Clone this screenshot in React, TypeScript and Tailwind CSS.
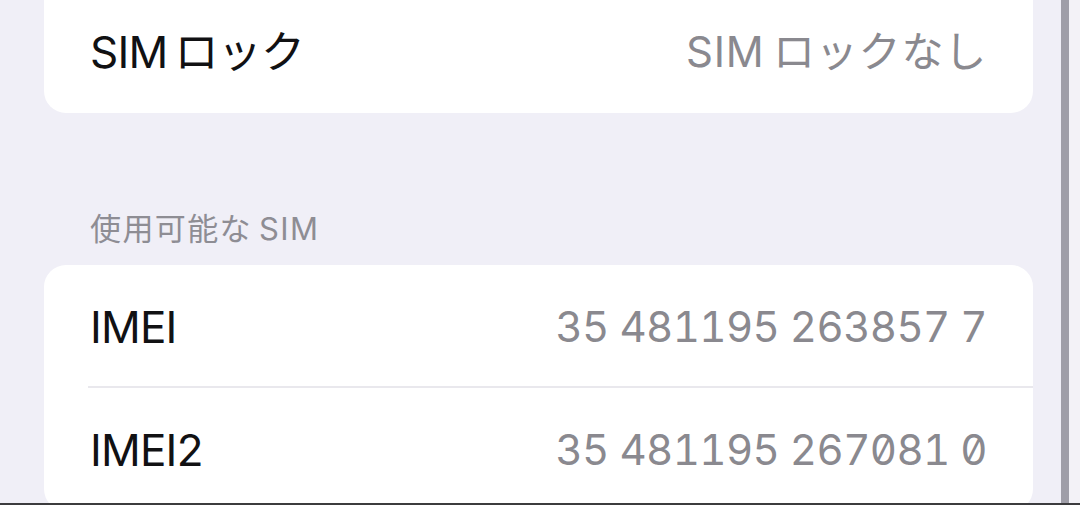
import React from 'react'

const font = { fontFamily: 'Inter, "Noto Sans CJK JP", sans-serif' }

function Row({
  label,
  value,
  valueClass = 'tracking-[-0.6px]',
  divider,
}: {
  label: string
  value: string
  valueClass?: string
  divider?: boolean
}) {
  return (
    <div className="relative flex h-[123px] items-center justify-between px-[46px]">
      <span className="text-[44px] tracking-[-0.8px] text-[#111113]">{label}</span>
      <span className={`text-[42px] text-[#8a898f] slashed-zero tabular-nums ${valueClass}`}>{value}</span>
      {divider && <div className="absolute bottom-0 left-[44px] right-0 h-[2px] bg-[#e9e8ed]" />}
    </div>
  )
}

export default function App() {
  return (
    <div className="flex h-[505px] w-[1080px] flex-col overflow-hidden bg-[#f0eff7]" style={font}>
      <div className="flex min-h-0 flex-1">
        <div className="w-[1061px] overflow-hidden">
          <div className="ml-[44px] mr-[28px] -mt-[10px] overflow-hidden rounded-b-[22px] bg-white">
            <Row label={'SIM\u2009ロック'} value={'SIM\u2009ロックなし'} valueClass="tracking-[0.8px]" />
          </div>
          <div className="ml-[90px] mt-[100px] text-[31px] leading-none tracking-[1.4px] text-[#8e8d94]">
            {'使用可能な\u2009SIM'}
          </div>
          <div className="ml-[44px] mr-[28px] mt-[21px] rounded-[22px] bg-white">
            <Row label="IMEI" value="35 481195 263857 7" divider />
            <Row label="IMEI2" value="35 481195 267081 0" />
          </div>
        </div>
        <div className="w-[8px] bg-[#9f9ea8]" />
        <div className="flex-1 bg-[#f3f2f7]" />
      </div>
      <div className="h-[2px] bg-[#3c3c3e]" />
    </div>
  )
}
